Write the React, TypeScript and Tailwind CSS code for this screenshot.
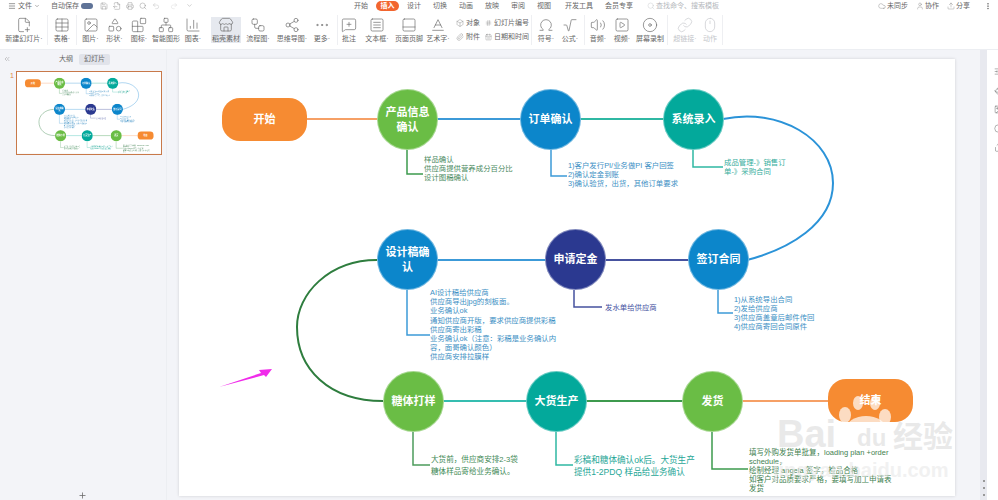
import React from 'react';
import {
  Menu, ChevronDown, Save, Printer, Search, Undo2, Redo2, Table, Image, Shapes, Blocks,
  Network, ChartColumn, Store, Workflow, Share2, MoreHorizontal, MessageSquarePlus, SquareMenu,
  FilePlus2, PanelBottom, Baseline, Box, Paperclip, Hash, CalendarDays, Omega, Radical, Volume2, SquarePlay, Disc, Link, Mouse,
  Cloud, User, Upload, ChevronsLeft, Plus, FileOutput, Share, Paintbrush, Circle, SlidersHorizontal,
} from 'lucide-react';

const tabs = [
  { label: '设计', w: 'w-[22px]' },
  { label: '切换', w: 'w-[22px]' },
  { label: '动画', w: 'w-[22px]' },
  { label: '放映', w: 'w-[22px]' },
  { label: '审阅', w: 'w-[22px]' },
  { label: '视图', w: 'w-[22px]' },
  { label: '开发工具', w: 'w-[40px]' },
  { label: '会员专享', w: 'w-[32px]' },
];

function Tool({ icon: Icon, label, width, active, muted }: { icon: any; label: string; width: string; active?: boolean; muted?: boolean }) {
  return (
    <div className={`${width} h-[26px] shrink-0 flex flex-col items-center justify-between ${active ? 'bg-[#e6e9ef]' : ''} ${muted ? 'text-[#c4c6ca]' : 'text-[#666]'}`}>
      <Icon size={16} strokeWidth={1} />
      <span className="text-[7px] leading-[9px] whitespace-nowrap">{label}</span>
    </div>
  );
}

function Sep() {
  return <div className="w-px h-[30px] shrink-0 bg-[#eeeff2] mx-[2px]" />;
}

function Mini({ icon: Icon, label }: { icon: any; label: string }) {
  return (
    <div className="flex items-center gap-[2px] text-[7px] leading-[9px] text-[#666] whitespace-nowrap">
      <Icon size={8} strokeWidth={1} />
      <span>{label}</span>
    </div>
  );
}

const links = (
  <>
    <path d="M128 60 H200" stroke="#f6a066" strokeWidth="2" fill="none" />
    <path d="M258 60 H342" stroke="#3c9ad8" strokeWidth="2" fill="none" />
    <path d="M400 60 H485" stroke="#2fb8a3" strokeWidth="2" fill="none" />
    <path d="M544 60 C600 48 654 80 654 124 C654 165 610 190 568 201" stroke="#2b93d8" strokeWidth="2" fill="none" />
    <path d="M258 201 H367" stroke="#3c9ad8" strokeWidth="2" fill="none" />
    <path d="M426 201 H510" stroke="#46529f" strokeWidth="2" fill="none" />
    <path d="M198 201 C150 201 118 235 118 268 C118 310 150 342 204 342" stroke="#2e7d3e" strokeWidth="2" fill="none" />
    <path d="M264 342 H348" stroke="#35bdb0" strokeWidth="2" fill="none" />
    <path d="M407 342 H504" stroke="#3d9a4d" strokeWidth="2" fill="none" />
    <path d="M563 342 H650" stroke="#f6a066" strokeWidth="2" fill="none" />
    <path d="M228 90 V115 H244" stroke="#3d9a4d" strokeWidth="1.5" fill="none" />
    <path d="M372 90 V117 H388" stroke="#3c9ad8" strokeWidth="1.5" fill="none" />
    <path d="M514 90 V108 H544" stroke="#2fb8a3" strokeWidth="1.5" fill="none" />
    <path d="M228 231 V276 H251" stroke="#3c9ad8" strokeWidth="1.5" fill="none" />
    <path d="M395 231 V248 H423" stroke="#46529f" strokeWidth="1.5" fill="none" />
    <path d="M539 231 V254 H554" stroke="#3c9ad8" strokeWidth="1.5" fill="none" />
    <path d="M234 372 V406 H251" stroke="#4c9c5c" strokeWidth="1.5" fill="none" />
    <path d="M377 372 V406 H394" stroke="#2fb8a3" strokeWidth="1.5" fill="none" />
    <path d="M533 372 V410 H569" stroke="#3d9a4d" strokeWidth="1.5" fill="none" />
  </>
);

const circles = [
  { x: 198, y: 30, bg: 'bg-[#6abd45]', t: '产品信息确认' },
  { x: 341, y: 30, bg: 'bg-[#0c86cb]', t: '订单确认' },
  { x: 484, y: 30, bg: 'bg-[#03a99b]', t: '系统录入' },
  { x: 198, y: 170, bg: 'bg-[#0c86cb]', t: '设计稿确认' },
  { x: 366, y: 170, bg: 'bg-[#2b3990]', t: '申请定金' },
  { x: 509, y: 170, bg: 'bg-[#0c86cb]', t: '签订合同' },
  { x: 204, y: 312, bg: 'bg-[#6abd45]', t: '糖体打样' },
  { x: 347, y: 312, bg: 'bg-[#03a99b]', t: '大货生产' },
  { x: 503, y: 312, bg: 'bg-[#6abd45]', t: '发货' },
];

const notes = [
  { x: 245, y: 96, lh: 'leading-[9px]', size: 'text-[7.4px]', c: 'text-[#4a8a60]', lines: ['样品确认', '供应商提供营养成分百分比', '设计图稿确认'] },
  { x: 389, y: 102, lh: 'leading-[9px]', size: 'text-[7.4px]', c: 'text-[#3c8fc4]', lines: ['1)客户发行PI/业务做PI 客户回签', '2)确认定金到账', '3)确认验货，出货，其他订单要求'] },
  { x: 545, y: 99, lh: 'leading-[9px]', size: 'text-[7.4px]', c: 'text-[#35ad9c]', lines: ['成品管理-》销售订', '单-》采购合同'] },
  { x: 251, y: 229, lh: 'leading-[9.2px]', size: 'text-[7.4px]', c: 'text-[#3c8fc4]', lines: ['AI设计稿给供应商', '供应商导出jpg的刻板面。', '业务确认ok', '通知供应商开版，要求供应商提供彩稿', '供应商寄出彩稿', '业务确认ok（注意：彩稿是业务确认内', '容，面哥确认颜色）', '供应商安排拉膜样'] },
  { x: 426, y: 243.5, lh: 'leading-[9px]', size: 'text-[7.4px]', c: 'text-[#46529f]', lines: ['发水单给供应商'] },
  { x: 555, y: 235.5, lh: 'leading-[9px]', size: 'text-[7.4px]', c: 'text-[#3c8fc4]', lines: ['1)从系统导出合同', '2)发给供应商', '3)供应商盖章后邮件传回', '4)供应商寄回合同原件'] },
  { x: 252, y: 395, lh: 'leading-[12px]', size: 'text-[7.6px]', c: 'text-[#3f8a56]', lines: ['大货前，供应商安排2-3袋', '糖体样品寄给业务确认。'] },
  { x: 395, y: 395, lh: 'leading-[12px]', size: 'text-[8.6px]', c: 'text-[#1fa797]', lines: ['彩稿和糖体确认ok后。大货生产', '提供1-2PDQ 样品给业务确认'] },
  { x: 570, y: 388.5, lh: 'leading-[9px]', size: 'text-[7.5px]', c: 'text-[#3f7f50]', lines: ['填写外购发货单批复，loading plan +order', 'schedule，', '绘制经理 angela 签字，检品合格', '如客户对品质要求严格，要填写加工申请表', '发货'] },
];

function Slide({ full }: { full?: boolean }) {
  return (
    <div className="relative w-[776px] h-[437px] bg-white overflow-hidden shadow-[0_0_3px_rgba(0,0,0,0.15)]">
      <svg className="absolute inset-0" width="776" height="437">{links}</svg>
      <div className="absolute left-[43px] top-[39px] w-[85px] h-[43px] rounded-[18px] bg-[#f68b32] flex items-center justify-center text-white text-[11px] font-bold">开始</div>
      <div className="absolute left-[649px] top-[320px] w-[85px] h-[43px] rounded-[18px] bg-[#f68b32] flex items-center justify-center text-white text-[11px] font-bold">结束</div>
      {circles.map((n) => (
        <div key={n.t} className={`absolute w-[61px] h-[61px] rounded-full ${n.bg} border border-white/40 flex items-center justify-center text-center text-white text-[11px] leading-[15px] font-bold`} style={{ left: n.x, top: n.y }}>
          <span className="w-[46px]">{n.t}</span>
        </div>
      ))}
      {notes.map((n) => (
        <div key={n.x} className={`absolute whitespace-nowrap ${n.c} ${n.size} ${n.lh}`} style={{ left: n.x, top: n.y }}>
          {n.lines.map((l) => <div key={l}>{l}</div>)}
        </div>
      ))}
      {full && (
        <>
          <svg className="absolute inset-0" width="776" height="437">
            <path d="M40 328 L82 314 L80 311 L93 310 L87 318 L85 316 Z" fill="#f02bea" />
            <ellipse cx="666" cy="356" rx="6" ry="8" fill="#fff" opacity="0.7" />
            <ellipse cx="679" cy="344" rx="5" ry="7" fill="#fff" opacity="0.7" />
            <ellipse cx="696" cy="344" rx="5" ry="7" fill="#fff" opacity="0.7" />
            <ellipse cx="706" cy="358" rx="6" ry="8" fill="#fff" opacity="0.7" />
            <ellipse cx="687" cy="370" rx="20" ry="13" fill="#fff" opacity="0.7" />
          </svg>
          <span className="absolute left-[598px] top-[355px] text-[38px] leading-[40px] font-bold text-[#e4e4e4]/80">Bai</span>
          <span className="absolute left-[678px] top-[366px] text-[24px] leading-[26px] font-bold text-[#e4e4e4]/80">du</span>
          <span className="absolute left-[714px] top-[362px] text-[30px] leading-[32px] font-bold text-[#e4e4e4]/80">经验</span>
          <span className="absolute left-[594px] top-[400px] text-[20px] leading-[22px] font-bold text-[#e8e8e8]/60">jingyan.baidu.com</span>
        </>
      )}
    </div>
  );
}

export default function App() {
  return (
    <div className="w-[998px] h-[500px] overflow-hidden flex flex-col bg-[#f3f4f8] blur-[0.6px] font-['Liberation_Sans','Noto_Sans_CJK_SC',sans-serif]">
      <div className="h-[50px] bg-white flex flex-col shrink-0 border-b border-[#eceef2]">
        <div className="h-[11px] flex items-center text-[#666] text-[7px] leading-[9px]">
          <div className="w-[350px] flex items-center shrink-0">
            <div className="flex items-center gap-[2px] pl-[8px] w-[45px] shrink-0"><Menu size={8} /><span>文件</span><ChevronDown size={6} /></div>
            <div className="flex items-center gap-[2px] w-[53px] pl-[6px] shrink-0">
              <span className="whitespace-nowrap">自动保存</span>
              <span className="w-[12px] h-[6px] rounded-full bg-[#5f7397] shrink-0" />
            </div>
            <div className="flex items-center gap-[5px] pl-[2px]">
              <Save size={8} strokeWidth={1} /><FileOutput size={8} strokeWidth={1} /><Printer size={8} strokeWidth={1} /><Search size={8} strokeWidth={1} />
              <Undo2 size={8} strokeWidth={1} className="text-[#aaa]" /><Redo2 size={8} strokeWidth={1} className="text-[#ccc] ml-[5px]" /><ChevronDown size={7} strokeWidth={1} className="ml-[3px]" />
            </div>
          </div>
          <div className="flex items-center gap-[4px]">
            <span className="w-[22px] text-center">开始</span>
            <span className="w-[23px] h-[10px] rounded-full bg-[#f2652f] text-white flex items-center justify-center font-bold">插入</span>
            {tabs.map((t) => <span key={t.label} className={`${t.w} text-center whitespace-nowrap`}>{t.label}</span>)}
            <span className="flex items-center gap-[1px] text-[#b5b8bc] ml-[8px] whitespace-nowrap"><Search size={8} strokeWidth={1} />查找命令、搜索模板</span>
          </div>
          <div className="ml-auto flex items-center gap-[8px] pr-[6px]">
            <span className="flex items-center gap-[1px]"><Cloud size={8} strokeWidth={1} />未同步</span>
            <span className="flex items-center gap-[1px]"><User size={8} strokeWidth={1} />协作</span>
            <span className="flex items-center gap-[1px]"><Upload size={8} strokeWidth={1} />分享</span>
            <MoreHorizontal size={8} className="rotate-90 ml-[6px]" />
          </div>
        </div>
        <div className="flex items-center h-[31px] mt-[3px] pl-[3px]">
          <Tool icon={FilePlus2} label="新建幻灯片·" width="w-[42px]" />
          <Sep />
          <Tool icon={Table} label="表格·" width="w-[24px]" />
          <Sep />
          <Tool icon={Image} label="图片·" width="w-[23px]" />
          <Tool icon={Shapes} label="形状·" width="w-[25px]" />
          <Tool icon={Blocks} label="图标·" width="w-[24px]" />
          <Tool icon={Network} label="智能图形" width="w-[30px]" />
          <Tool icon={ChartColumn} label="图表·" width="w-[24px]" />
          <div className="w-[6px] shrink-0" />
          <Tool icon={Store} label="稻壳素材" width="w-[30px]" active />
          <Tool icon={Workflow} label="流程图·" width="w-[34px]" />
          <Tool icon={Share2} label="思维导图·" width="w-[34px]" />
          <Tool icon={MoreHorizontal} label="更多·" width="w-[26px]" />
          <Sep />
          <Tool icon={MessageSquarePlus} label="批注" width="w-[18px]" />
          <Tool icon={SquareMenu} label="文本框·" width="w-[38px]" />
          <Tool icon={PanelBottom} label="页面页脚" width="w-[26px]" />
          <Tool icon={Baseline} label="艺术字·" width="w-[32px]" />
          <div className="flex flex-col gap-[5px] ml-[2px] w-[29px] shrink-0">
            <Mini icon={Box} label="对象" />
            <Mini icon={Paperclip} label="附件" />
          </div>
          <div className="flex flex-col gap-[5px] w-[44px] shrink-0">
            <Mini icon={Hash} label="幻灯片编号" />
            <Mini icon={CalendarDays} label="日期和时间" />
          </div>
          <Sep />
          <Tool icon={Omega} label="符号·" width="w-[24px]" />
          <Tool icon={Radical} label="公式·" width="w-[24px]" />
          <Sep />
          <Tool icon={Volume2} label="音频·" width="w-[22px]" />
          <Tool icon={SquarePlay} label="视频·" width="w-[26px]" />
          <Tool icon={Disc} label="屏幕录制" width="w-[30px]" />
          <Sep />
          <Tool icon={Link} label="超链接·" width="w-[30px]" muted />
          <Tool icon={Mouse} label="动作" width="w-[20px]" muted />
          <Sep />
        </div>
      </div>
      <div className="flex-1 flex min-h-0">
        <div className="w-[167px] shrink-0 flex flex-col relative border-r border-[#eceef2]">
          <div className="h-[18px] flex items-center text-[7px] text-[#666] pl-[3px]">
            <ChevronsLeft size={8} strokeWidth={1} />
            <div className="ml-[48px] flex items-center gap-[6px]">
              <span>大纲</span>
              <span className="px-[5px] h-[11px] flex items-center rounded-[2px] bg-[#e1e3ea]">幻灯片</span>
            </div>
          </div>
          <div className="flex items-start mt-[3px] pl-[10px]">
            <span className="text-[7px] leading-[9px] text-[#e2843f] w-[6px]">1</span>
            <div className="w-[146px] h-[84px] border border-[#c8794a] bg-white overflow-hidden">
              <div className="origin-top-left scale-[0.186]"><Slide /></div>
            </div>
          </div>
          <Plus size={9} className="absolute left-[78px] bottom-[0px] text-[#666]" />
        </div>
        <div className="w-[12px] shrink-0" />
        <div className="pt-[9px]"><Slide full /></div>
        <div className="w-[25px] shrink-0" />
        <div className="w-[7px] shrink-0 bg-[#e8e9ef] flex flex-col items-center justify-end gap-[5px] pb-[4px] text-[#888]">
          <span className="w-[2px] h-[2px] bg-[#999]" />
          <span className="w-[2px] h-[2px] bg-[#999]" />
          <span className="w-[2px] h-[2px] bg-[#999]" />
        </div>
        <div className="flex-1 bg-white pl-[7px] pt-[17px] flex flex-col gap-[10px] text-[#555] overflow-hidden">
          <SlidersHorizontal size={9} strokeWidth={1.2} className="shrink-0" />
          <Paintbrush size={9} strokeWidth={1.2} className="shrink-0" />
          <Image size={9} strokeWidth={1.2} className="shrink-0" />
          <Circle size={9} strokeWidth={1.2} className="shrink-0" />
          <Share size={9} strokeWidth={1.2} className="shrink-0" />
        </div>
      </div>
    </div>
  );
}
